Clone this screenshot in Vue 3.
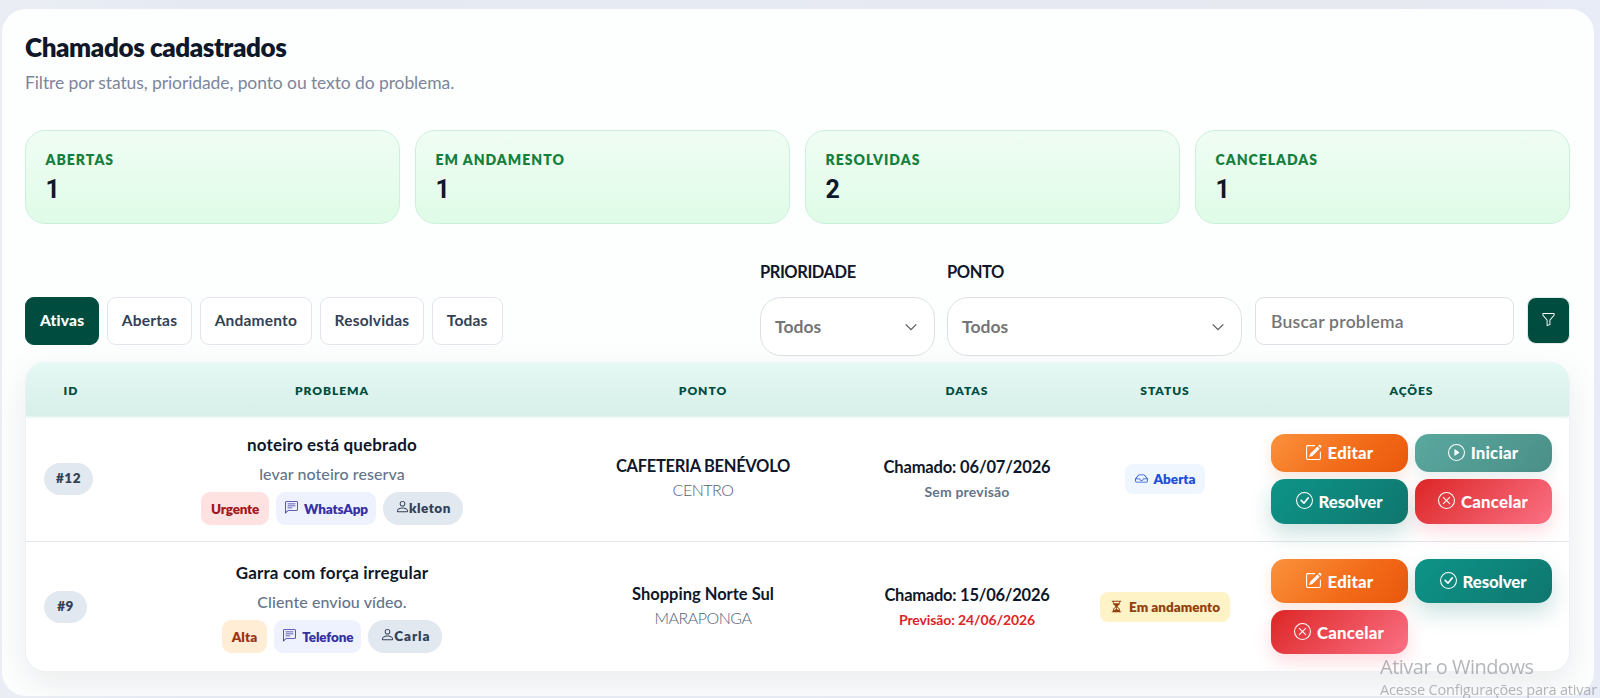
<template>
  <div class="page">
    <section class="panel">
      <header class="panel-head">
        <h2 class="title">Chamados cadastrados</h2>
        <p class="subtitle">Filtre por status, prioridade, ponto ou texto do problema.</p>
      </header>

      <div class="stats">
        <div v-for="s in stats" :key="s.label" class="stat">
          <span class="stat-label">{{ s.label }}</span>
          <strong class="stat-value">{{ s.value }}</strong>
        </div>
      </div>

      <div class="toolbar">
        <div class="tabs">
          <button
            v-for="t in tabs"
            :key="t"
            type="button"
            class="tab"
            :class="{ active: t === activeTab }"
            @click="activeTab = t"
          >{{ t }}</button>
        </div>
        <form class="filters" @submit.prevent>
          <div class="field prioridade">
            <label class="field-label">PRIORIDADE</label>
            <div class="select">
              <span>Todos</span>
              <svg viewBox="0 0 16 16"><path d="M2 5l6 6 6-6" /></svg>
            </div>
          </div>
          <div class="field ponto">
            <label class="field-label">PONTO</label>
            <div class="select">
              <span>Todos</span>
              <svg viewBox="0 0 16 16"><path d="M2 5l6 6 6-6" /></svg>
            </div>
          </div>
          <input v-model="busca" class="search" type="text" placeholder="Buscar problema" />
          <button type="submit" class="filter-btn">
            <svg class="icon" viewBox="0 0 16 16"><path :d="icons.funnel" /></svg>
          </button>
        </form>
      </div>

      <div class="table">
        <div class="row head">
          <div v-for="c in columns" :key="c" class="cell">{{ c }}</div>
        </div>
        <div v-for="c in chamados" :key="c.id" class="row body" :class="'row-' + c.id">
          <div class="cell cell-id"><span class="pill">#{{ c.id }}</span></div>
          <div class="cell">
            <div class="problem">{{ c.problema }}</div>
            <div class="detail">{{ c.detalhe }}</div>
            <div class="tags">
              <span class="tag" :class="c.prioridade.toLowerCase()">{{ c.prioridade }}</span>
              <span class="tag canal">
                <svg class="icon" viewBox="0 0 16 16"><path v-for="d in icons.chat" :key="d" :d="d" /></svg>
                {{ c.canal }}
              </span>
              <span class="pill user">
                <svg class="icon" viewBox="0 0 16 16"><path :d="icons.person" /></svg>{{ c.usuario }}
              </span>
            </div>
          </div>
          <div class="cell">
            <div class="place">{{ c.ponto }}</div>
            <div class="district">{{ c.bairro }}</div>
          </div>
          <div class="cell">
            <div class="date">Chamado: {{ c.data }}</div>
            <div class="forecast" :class="{ late: c.atrasado }">{{ c.previsao }}</div>
          </div>
          <div class="cell">
            <span class="status" :class="c.statusClass">
              <svg class="icon" viewBox="0 0 16 16"><path :d="icons[c.statusIcon]" /></svg>
              {{ c.status }}
            </span>
          </div>
          <div class="cell cell-actions">
            <div class="actions">
              <button v-for="a in c.acoes" :key="a" type="button" class="action" :class="a.toLowerCase()">
                <svg class="icon" viewBox="0 0 16 16"><path v-for="d in actionIcons[a]" :key="d" :d="d" /></svg>
                <span>{{ a }}</span>
              </button>
            </div>
          </div>
        </div>
      </div>
    </section>

    <div class="watermark">
      <div class="wm-title">Ativar o Windows</div>
      <div class="wm-text">Acesse Configurações para ativar</div>
    </div>
  </div>
</template>

<script setup>
import { ref } from 'vue'

const tabs = ['Ativas', 'Abertas', 'Andamento', 'Resolvidas', 'Todas']
const activeTab = ref('Ativas')
const busca = ref('')

const stats = [
  { label: 'ABERTAS', value: 1 },
  { label: 'EM ANDAMENTO', value: 1 },
  { label: 'RESOLVIDAS', value: 2 },
  { label: 'CANCELADAS', value: 1 },
]

const columns = ['ID', 'PROBLEMA', 'PONTO', 'DATAS', 'STATUS', 'AÇÕES']

const chamados = [
  {
    id: 12,
    problema: 'noteiro está quebrado',
    detalhe: 'levar noteiro reserva',
    prioridade: 'Urgente',
    canal: 'WhatsApp',
    usuario: 'kleton',
    ponto: 'CAFETERIA BENÉVOLO',
    bairro: 'CENTRO',
    data: '06/07/2026',
    previsao: 'Sem previsão',
    atrasado: false,
    status: 'Aberta',
    statusClass: 'aberta',
    statusIcon: 'inbox',
    acoes: ['Editar', 'Iniciar', 'Resolver', 'Cancelar'],
  },
  {
    id: 9,
    problema: 'Garra com força irregular',
    detalhe: 'Cliente enviou vídeo.',
    prioridade: 'Alta',
    canal: 'Telefone',
    usuario: 'Carla',
    ponto: 'Shopping Norte Sul',
    bairro: 'MARAPONGA',
    data: '15/06/2026',
    previsao: 'Previsão: 24/06/2026',
    atrasado: true,
    status: 'Em andamento',
    statusClass: 'andamento',
    statusIcon: 'hourglass',
    acoes: ['Editar', 'Resolver', 'Cancelar'],
  },
]

const circle = 'M8 15A7 7 0 1 1 8 1a7 7 0 0 1 0 14m0 1A8 8 0 1 0 8 0a8 8 0 0 0 0 16'

const icons = {
  funnel: 'M1.5 1.5A.5.5 0 0 1 2 1h12a.5.5 0 0 1 .5.5v2a.5.5 0 0 1-.128.334L10 8.692V13.5a.5.5 0 0 1-.342.474l-3 1A.5.5 0 0 1 6 14.5V8.692L1.628 3.834A.5.5 0 0 1 1.5 3.5zm1 .5v1.308l4.372 4.858A.5.5 0 0 1 7 8.5v5.306l2-.666V8.5a.5.5 0 0 1 .128-.334L13.5 3.308V2z',
  chat: [
    'M14 1a1 1 0 0 1 1 1v8a1 1 0 0 1-1 1H4.414A2 2 0 0 0 3 11.586l-2 2V2a1 1 0 0 1 1-1zM2 0a2 2 0 0 0-2 2v12.793a.5.5 0 0 0 .854.353l2.853-2.853A1 1 0 0 1 4.414 12H14a2 2 0 0 0 2-2V2a2 2 0 0 0-2-2z',
    'M3 3.5a.5.5 0 0 1 .5-.5h9a.5.5 0 0 1 0 1h-9a.5.5 0 0 1-.5-.5M3 6a.5.5 0 0 1 .5-.5h9a.5.5 0 0 1 0 1h-9A.5.5 0 0 1 3 6m0 2.5a.5.5 0 0 1 .5-.5h5a.5.5 0 0 1 0 1h-5a.5.5 0 0 1-.5-.5',
  ],
  person: 'M8 8a3 3 0 1 0 0-6 3 3 0 0 0 0 6m2-3a2 2 0 1 1-4 0 2 2 0 0 1 4 0m4 8c0 1-1 1-1 1H3s-1 0-1-1 1-4 6-4 6 3 6 4m-1-.004c-.001-.246-.154-.986-.832-1.664C11.516 10.68 10.289 10 8 10s-3.516.68-4.168 1.332c-.678.678-.83 1.418-.832 1.664z',
  inbox: 'M4.98 4a.5.5 0 0 0-.39.188L1.54 8H6a.5.5 0 0 1 .5.5 1.5 1.5 0 1 0 3 0A.5.5 0 0 1 10 8h4.46l-3.05-3.812A.5.5 0 0 0 11.02 4zm9.954 5H10.45a2.5 2.5 0 0 1-4.9 0H1.066l.32 2.562a.5.5 0 0 0 .497.438h12.234a.5.5 0 0 0 .496-.438zM3.809 3.563A1.5 1.5 0 0 1 4.981 3h6.038a1.5 1.5 0 0 1 1.172.563l3.7 4.625a.5.5 0 0 1 .105.374l-.39 3.124A1.5 1.5 0 0 1 14.117 13H1.883a1.5 1.5 0 0 1-1.489-1.314l-.39-3.124a.5.5 0 0 1 .106-.374z',
  hourglass: 'M2.5 15a.5.5 0 1 1 0-1h1v-1a4.5 4.5 0 0 1 2.557-4.06c.29-.139.443-.377.443-.59v-.7c0-.213-.154-.451-.443-.59A4.5 4.5 0 0 1 3.5 3V2h-1a.5.5 0 0 1 0-1h11a.5.5 0 0 1 0 1h-1v1a4.5 4.5 0 0 1-2.557 4.06c-.29.139-.443.377-.443.59v.7c0 .213.154.451.443.59A4.5 4.5 0 0 1 12.5 13v1h1a.5.5 0 0 1 0 1zm2-13v1q0 .59.195 1.131h6.61Q11.5 3.59 11.5 3V2zm3 6.35c0 .701-.478 1.236-1.011 1.492A3.5 3.5 0 0 0 4.5 13s.866-1.299 3-1.48zm1 0v3.17c2.134.181 3 1.48 3 1.48a3.5 3.5 0 0 0-1.989-3.158C8.978 9.586 8.5 9.052 8.5 8.351z',
}

const actionIcons = {
  Editar: [
    'M15.502 1.94a.5.5 0 0 1 0 .706L14.459 3.69l-2-2L13.502.646a.5.5 0 0 1 .707 0l1.293 1.293zm-1.75 2.456-2-2L4.939 9.21a.5.5 0 0 0-.121.196l-.805 2.414a.25.25 0 0 0 .316.316l2.414-.805a.5.5 0 0 0 .196-.12z',
    'M1 13.5A1.5 1.5 0 0 0 2.5 15h11a1.5 1.5 0 0 0 1.5-1.5v-6a.5.5 0 0 0-1 0v6a.5.5 0 0 1-.5.5h-11a.5.5 0 0 1-.5-.5v-11a.5.5 0 0 1 .5-.5H9a.5.5 0 0 0 0-1H2.5A1.5 1.5 0 0 0 1 2.5z',
  ],
  Iniciar: [
    circle,
    'M6.271 5.055a.5.5 0 0 1 .52.038l3.5 2.5a.5.5 0 0 1 0 .814l-3.5 2.5A.5.5 0 0 1 6 10.5v-5a.5.5 0 0 1 .271-.445',
  ],
  Resolver: [
    circle,
    'M10.97 4.97a.235.235 0 0 0-.02.022L7.477 9.417 5.384 7.323a.75.75 0 0 0-1.06 1.06L6.97 11.03a.75.75 0 0 0 1.079-.02l3.992-4.99a.75.75 0 0 0-1.071-1.05',
  ],
  Cancelar: [
    circle,
    'M4.646 4.646a.5.5 0 0 1 .708 0L8 7.293l2.646-2.647a.5.5 0 0 1 .708.708L8.707 8l2.647 2.646a.5.5 0 0 1-.708.708L8 8.707l-2.646 2.647a.5.5 0 0 1-.708-.708L7.293 8 4.646 5.354a.5.5 0 0 1 0-.708',
  ],
}
</script>

<style>
body { background: #e5eaf2; overflow: hidden; }
</style>

<style scoped>
.page {
  box-sizing: border-box;
  height: 698px;
  padding: 9px 6px 2px 2px;
  background: linear-gradient(90deg, #eaedf4, #e5eaf2 12%, #e7e9f1 88%, #e8ecf7);
  font-family: Lato, "Liberation Sans", sans-serif;
  color: #0f172a;
}
.page * { box-sizing: border-box; }
.panel {
  height: 687px;
  padding: 23px 24px 23px 23px;
  border-radius: 24px;
  background: #fdfefe;
  overflow: hidden;
}
.icon { fill: currentColor; flex-shrink: 0; }
button { font-family: inherit; cursor: pointer; }

.panel-head { height: 98px; }
.title {
  margin: 0;
  font-size: 26px;
  line-height: 31px;
  font-weight: 800;
  letter-spacing: -0.4px;
}
.subtitle {
  margin: 7px 0 0;
  font-size: 17.5px;
  line-height: 26px;
  letter-spacing: -0.1px;
  color: #7c869c;
}

.stats { display: grid; grid-template-columns: repeat(4, 1fr); gap: 15px; }
.stat {
  height: 94px;
  padding: 18px 19.5px;
  border: 1px solid #cbf0dc;
  border-radius: 20px;
  background: linear-gradient(180deg, #f0fdf4, #dffbe7);
}
.stat-label {
  display: block;
  font-size: 14px;
  line-height: 22px;
  font-weight: 800;
  letter-spacing: 1px;
  color: #15803d;
}
.stat-value {
  display: block;
  margin-top: 4px;
  font-family: Roboto, Lato, sans-serif;
  font-size: 25px;
  line-height: 30px;
  font-weight: 700;
}

.toolbar { display: flex; justify-content: space-between; margin-top: 33px; height: 105px; }
.tabs { display: flex; gap: 7.5px; padding-top: 40px; }
.tab {
  height: 48px;
  padding: 0 14px 2px;
  border: 1px solid #e2e5ec;
  border-radius: 9px;
  background: #fff;
  color: #334155;
  font-size: 15.5px;
  font-weight: 700;
  letter-spacing: 0.19px;
}
.tab.active { background: #004d40; border-color: #004d40; color: #fff; font-weight: 900; }
.filters { display: flex; }
.field-label {
  display: block;
  height: 40px;
  line-height: 30px;
  font-size: 16.5px;
  font-weight: 700;
  letter-spacing: -0.45px;
}
.select {
  display: flex;
  align-items: center;
  justify-content: space-between;
  height: 59px;
  padding: 0 16px 0 14px;
  border: 1px solid #dde1e7;
  border-radius: 21px;
  background: #fff;
  color: #757575;
  font-size: 17.5px;
  font-weight: 700;
}
.select svg { width: 14px; height: 14px; fill: none; stroke: #596066; stroke-width: 1.6; }
.prioridade { width: 175px; margin-right: 12px; }
.ponto { width: 295px; margin-right: 13px; }
.search {
  width: 259px;
  height: 48px;
  margin: 40px 13px 0 0;
  padding: 0 15px;
  border: 1px solid #dde1e7;
  border-radius: 9px;
  background: #fff;
  outline: none;
  font-family: inherit;
  font-size: 17.5px;
  font-weight: 600;
  letter-spacing: 0.25px;
}
.search::placeholder { color: #757575; opacity: 1; }
.filter-btn {
  display: flex;
  align-items: center;
  justify-content: center;
  width: 43px;
  height: 47px;
  margin-top: 40px;
  padding: 0 0 2px;
  border: 1px solid #dfeee9;
  border-radius: 9px;
  background: #004d40;
  color: #fff;
}
.filter-btn .icon { width: 15px; height: 15px; }

.table {
  height: 310px;
  border: 1px solid #eef1f3;
  border-top: none;
  border-radius: 20px;
  background: #fff;
  box-shadow: 0 12px 36px rgba(15, 23, 42, 0.08);
  overflow: hidden;
}
.row {
  display: grid;
  grid-template-columns: 90px 432px 310px 218px 178px 315px;
  align-items: center;
  text-align: center;
}
.head {
  height: 54px;
  padding-top: 2px;
  background: linear-gradient(180deg, #e6f9f4, #d7eee9);
  box-shadow: 0 1px 3px #d7eee9;
  color: #004d40;
  font-size: 12px;
  font-weight: 800;
  letter-spacing: 0.95px;
}
.body { height: 126px; border-bottom: 1px solid #e2e5ea; }
.row-9 { height: 129px; border-bottom: none; }
.cell-id { display: flex; padding-left: 18px; }
.pill {
  display: inline-flex;
  align-items: center;
  justify-content: center;
  min-width: 43px;
  height: 32px;
  padding: 0 12px 1px;
  border-radius: 16px;
  background: #e2e8f0;
  color: #334155;
  font-size: 13.5px;
  font-weight: 800;
  letter-spacing: 0.5px;
}
.problem { margin-top: -1px; font-size: 17px; line-height: 28px; font-weight: 700; letter-spacing: 0.15px; }
.detail { margin-top: 1px; font-size: 16px; line-height: 28px; color: #64748b; font-weight: 500; letter-spacing: 0.08px; }
.tags { display: flex; justify-content: center; gap: 7px; margin-top: 4px; }
.tag {
  display: inline-flex;
  align-items: center;
  height: 33px;
  padding: 0 10px;
  border-radius: 9px;
  font-size: 13.5px;
  font-weight: 800;
  letter-spacing: -0.15px;
}
.urgente { background: #fee2e2; color: #a3161a; letter-spacing: -0.2px; }
.alta { background: #ffedd5; color: #9a3412; letter-spacing: 0.1px; }
.canal { gap: 6px; padding: 0 8px 0 9px; background: #eef2ff; color: #3730a3; }
.canal .icon { width: 13px; height: 13px; margin-bottom: 3px; }
.user { height: 33px; }
.user .icon { width: 15px; height: 15px; margin: 0 -1px 3px 0; }
.row-9 .user { letter-spacing: 0.9px; }

.place { font-size: 16.5px; line-height: 24px; font-weight: 700; margin-top: -2px; }
.row-12 .place { letter-spacing: -0.3px; }
.district { font-size: 16px; line-height: 24px; font-weight: 300; letter-spacing: -0.5px; color: #536073; }
.date { padding-top: 1px; font-size: 16.5px; line-height: 25px; font-weight: 700; letter-spacing: -0.15px; }
.row-9 .date { letter-spacing: -0.25px; }
.forecast { font-size: 14px; line-height: 24px; color: #64748b; font-weight: 700; letter-spacing: 0.2px; }
.forecast.late { color: #dc2626; letter-spacing: -0.1px; }

.status {
  display: inline-flex;
  align-items: center;
  gap: 6px;
  height: 30px;
  padding: 0 10px;
  border-radius: 8px;
  font-size: 13.5px;
  font-weight: 800;
}
.status .icon { width: 13px; height: 13px; }
.aberta { background: #eff6ff; color: #1d4ed8; }
.andamento { background: #fef3c7; color: #92400e; }

.cell-actions { padding-right: 1px; }
.actions { display: grid; grid-template-columns: 137px 137px; justify-content: center; gap: 7px; }
.action {
  display: flex;
  align-items: center;
  justify-content: center;
  gap: 6px;
  height: 44px;
  padding: 0;
  border: none;
  border-radius: 14px;
  color: #fff;
  font-size: 16.8px;
  font-weight: 900;
  letter-spacing: 0.2px;
}
.resolver { letter-spacing: -0.1px; }
.row-12 .action { height: 45px; }
.row-12 .action:nth-child(-n + 2) { height: 38px; }
.action .icon { width: 17px; height: 17px; margin-bottom: 1px; }
.editar { background: linear-gradient(135deg, #fb923c, #f26a18 60%, #ea580c); box-shadow: 0 6px 14px rgba(234, 88, 12, 0.13); }
.iniciar { background: linear-gradient(135deg, #5aa89f, #4a8f88); box-shadow: 0 6px 14px rgba(15, 118, 110, 0.1); }
.resolver { background: linear-gradient(135deg, #0d9488, #0f766e); box-shadow: 0 10px 22px rgba(15, 118, 110, 0.22); }
.cancelar { background: linear-gradient(135deg, #dc2626, #fb7185); box-shadow: 0 8px 18px rgba(244, 63, 94, 0.18); }

/* aviso do sistema por cima da tela */
.watermark {
  position: fixed;
  top: 653px;
  left: 1380px;
  font-family: "Open Sans", "Noto Sans", sans-serif;
  color: rgba(140, 144, 148, 0.65);
  white-space: nowrap;
}
.wm-title { font-size: 20px; line-height: 28px; letter-spacing: -0.5px; }
.wm-text { font-size: 14.5px; line-height: 17px; letter-spacing: -0.2px; }
</style>
